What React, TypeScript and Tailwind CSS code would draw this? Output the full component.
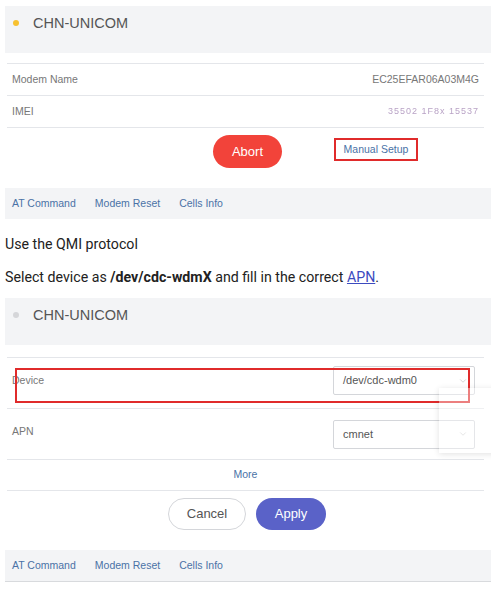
import { ChevronDown } from "lucide-react";

const Line = () => <div className="mx-[7px] h-px bg-[#e4e6ea]" />;

const Panel = ({ dot }: { dot: string }) => (
  <div className="ml-[5px] h-[47px] bg-[#f3f4f6] flex items-start pt-[7px]">
    <span className={`ml-[8px] h-[6px] w-[6px] rounded-full ${dot} mt-[7px]`} />
    <span className="ml-[14px] text-[14.5px] leading-[20px] text-[#555]">CHN-UNICOM</span>
  </div>
);

const Tabs = () => (
  <div className="ml-[5px] h-[31px] bg-[#f3f4f6] flex items-center gap-[19px] pl-[7px] text-[10.5px] text-[#4a72a6]">
    <span>AT Command</span>
    <span>Modem Reset</span>
    <span>Cells Info</span>
  </div>
);

const Select = ({ value }: { value: string }) => (
  <div className="w-[142px] h-[29px] border border-[#d4d6da] rounded-[2px] flex items-center justify-between pl-[9px] pr-[6px] text-[11px] text-[#555]">
    <span>{value}</span>
    <ChevronDown className="h-[10px] w-[10px] text-[#bbb]" strokeWidth={1.5} />
  </div>
);

export default function App() {
  return (
    <div className="relative w-[491px] h-[590px] overflow-hidden bg-white font-['Liberation_Sans',Arial,sans-serif]">
      <div className="h-[6px]" />
      <Panel dot="bg-[#f7c130]" />
      <div className="h-[10px]" />
      <Line />
      <div className="mx-[7px] h-[31px] flex items-center justify-between px-[5px] text-[10.5px] text-[#777]">
        <span>Modem Name</span>
        <span>EC25EFAR06A03M4G</span>
      </div>
      <Line />
      <div className="mx-[7px] h-[31px] flex items-center justify-between px-[5px] text-[10.5px] text-[#777]">
        <span>IMEI</span>
        <span className="text-[9px] tracking-[1px] text-[#b9a3c6] blur-[0.5px]">35502 1F8x 15537</span>
      </div>
      <Line />
      <div className="h-[60px] flex items-start pt-[7px] pl-[213px]">
        <button className="w-[69px] h-[33px] rounded-full bg-[#f2433a] text-white text-[13px]">Abort</button>
        <div className="ml-[52px] mt-[3px] w-[84px] h-[23px] border-2 border-[#e02b2b] flex items-center justify-center text-[10.5px] text-[#4a72a6]">
          Manual Setup
        </div>
      </div>
      <Tabs />
      <div className="pl-[5px] font-['Roboto',sans-serif] text-[14.2px] text-[#222]">
        <p className="mt-[14px] leading-[22px]">Use the QMI protocol</p>
        <p className="mt-[11px] leading-[22px]">
          Select device as <b>/dev/cdc-wdmX</b> and fill in the correct{" "}
          <span className="text-[#3c4bbf] underline">APN</span>.
        </p>
      </div>
      <div className="h-[10px]" />
      <Panel dot="bg-[#d5d6d9]" />
      <div className="h-[12px]" />
      <Line />
      <div className="relative mx-[7px] h-[50px] flex items-start justify-between pl-[5px] pr-[9px] pt-[8px] text-[10.5px] text-[#777]">
        <span className="mt-[7px]">Device</span>
        <Select value="/dev/cdc-wdm0" />
        <div className="absolute left-[8px] top-[10px] w-[455px] h-[35px] border-2 border-[#e02b2b]" />
      </div>
      <Line />
      <div className="mx-[7px] h-[50px] flex items-center justify-between pl-[5px] pr-[9px] text-[10.5px] text-[#777]">
        <span className="-mt-[5px]">APN</span>
        <Select value="cmnet" />
      </div>
      <Line />
      <div className="h-[30px] flex items-center justify-center text-[10.5px] text-[#4a72a6]">More</div>
      <Line />
      <div className="h-[59px] flex items-start justify-center gap-[10px] pt-[7px] pl-[3px]">
        <button className="w-[78px] h-[32px] rounded-full border border-[#d4d6da] bg-white text-[13px] text-[#555]">Cancel</button>
        <button className="w-[70px] h-[32px] rounded-full bg-[#5a62c8] text-white text-[13px]">Apply</button>
      </div>
      <Tabs />
      <div className="ml-[5px] h-px bg-[#d8dadd]" />
      <div className="absolute left-[439px] top-[388px] w-[60px] h-[65px] bg-white/40 shadow-[0_1px_6px_rgba(0,0,0,0.12)]" />
    </div>
  );
}
